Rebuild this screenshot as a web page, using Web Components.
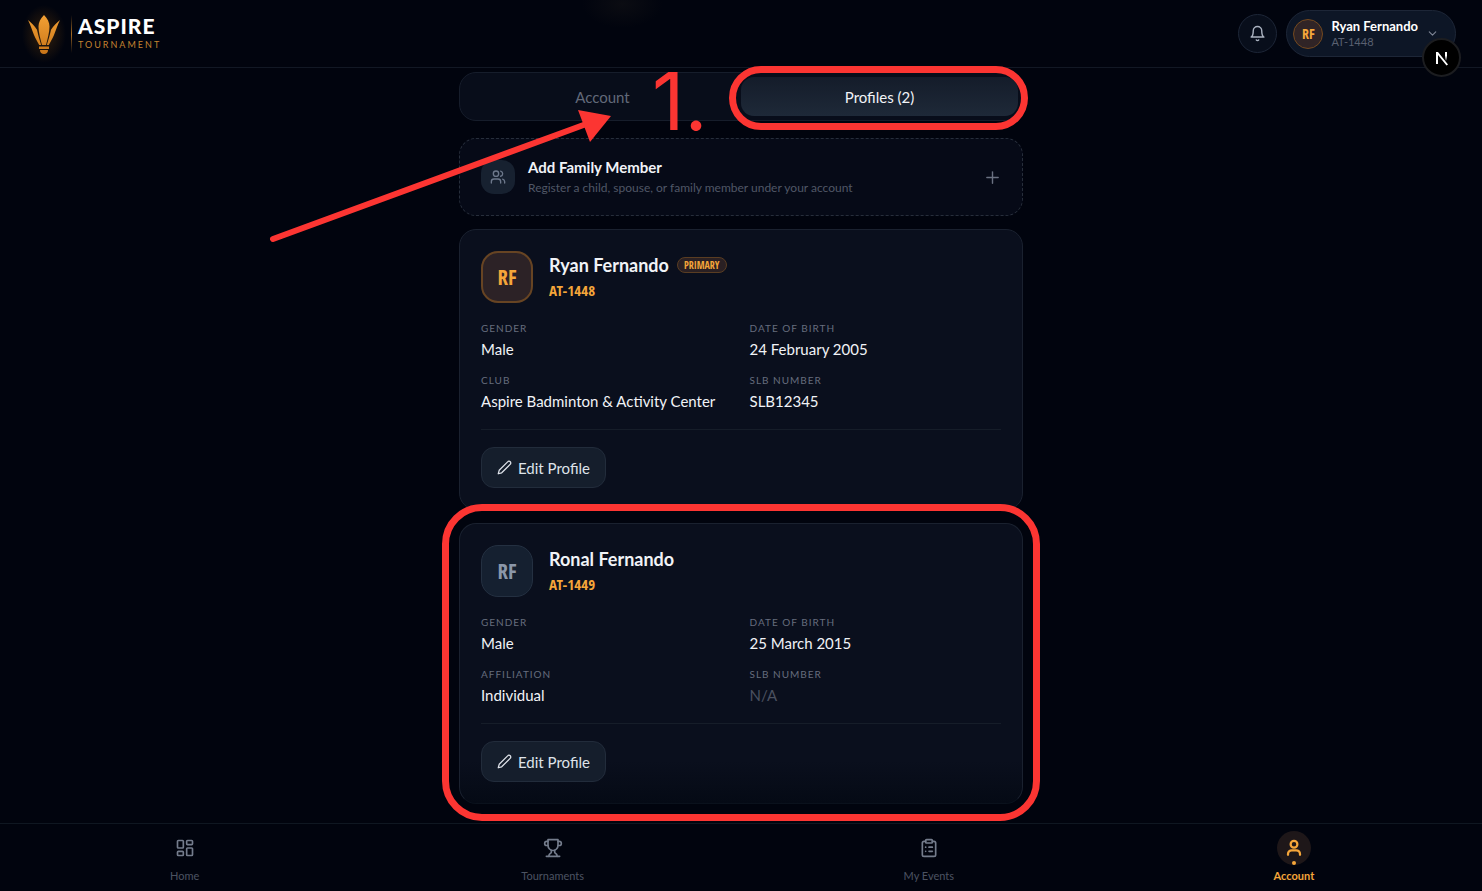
<!DOCTYPE html>
<html lang="en">
<head>
<meta charset="utf-8">
<meta name="viewport" content="width=device-width, initial-scale=1">
<title>Aspire Tournament</title>
<style>
  :root {
    --page: #01040e;
    --panel: #080d1a;
    --card: #0a0f1d;
    --raised: #151e2c;
    --line: #1a212f;
    --text: #f1f3f7;
    --muted: #5a6171;
    --accent: #f5a63a;
    --mark: #fc3532;
    --narrow: "Liberation Sans Narrow", "Open Sans Condensed", "Liberation Sans", sans-serif;
  }

  body {
    margin: 0;
    min-height: 100vh;
    display: flex;
    flex-direction: column;
    background: var(--page);
    color: var(--text);
    font-family: Lato, "Liberation Sans", sans-serif;
    font-size: 15px;
  }
</style>
</head>
<body>
  <app-header></app-header>

  <account-page>
    <profile-tabs></profile-tabs>
    <add-member></add-member>
    <profile-card name="Ryan Fernando" player-id="AT-1448" initials="RF" primary>
      <info-field label="Gender">Male</info-field>
      <info-field label="Date of birth">24 February 2005</info-field>
      <info-field label="Club">Aspire Badminton &amp; Activity Center</info-field>
      <info-field label="SLB number">SLB12345</info-field>
    </profile-card>
    <profile-card name="Ronal Fernando" player-id="AT-1449" initials="RF" marked>
      <info-field label="Gender">Male</info-field>
      <info-field label="Date of birth">25 March 2015</info-field>
      <info-field label="Affiliation">Individual</info-field>
      <info-field label="SLB number" empty>N/A</info-field>
    </profile-card>
    <step-arrow slot="overlay">1.</step-arrow>
  </account-page>

  <bottom-nav>
    <nav-item icon="home">Home</nav-item>
    <nav-item icon="trophy">Tournaments</nav-item>
    <nav-item icon="clipboard">My Events</nav-item>
    <nav-item icon="user" active>Account</nav-item>
  </bottom-nav>

<script>
/**
 * Stroke icons on a 24 unit grid.
 */
const icons = {
  bell: '<path d="M6 8a6 6 0 0 1 12 0c0 7 3 9 3 9H3s3-2 3-9"/><path d="M10.3 21a1.94 1.94 0 0 0 3.4 0"/>',
  chevron: '<path d="m6 9 6 6 6-6"/>',
  users: '<path d="M16 21v-2a4 4 0 0 0-4-4H6a4 4 0 0 0-4 4v2"/><circle cx="9" cy="7" r="4"/><path d="M22 21v-2a4 4 0 0 0-3-3.87"/><path d="M16 3.13a4 4 0 0 1 0 7.75"/>',
  plus: '<path d="M4 12h16"/><path d="M12 4v16"/>',
  pencil: '<path d="M17 3a2.85 2.83 0 1 1 4 4L7.500 20.500 2 22l1.500-5.500Z"/>',
  home: '<rect x="3" y="3" width="7" height="9" rx="1"/><rect x="14" y="3" width="7" height="5" rx="1"/><rect x="14" y="12" width="7" height="9" rx="1"/><rect x="3" y="16" width="7" height="5" rx="1"/>',
  trophy: '<path d="M6 9H4.500a2.500 2.500 0 0 1 0-5H6"/><path d="M18 9h1.500a2.500 2.500 0 0 0 0-5H18"/><path d="M4 22h16"/><path d="M10 14.660V17c0 .55-.47.98-.97 1.210C7.850 18.750 7 20.240 7 22"/><path d="M14 14.660V17c0 .55.47.98.97 1.210C16.150 18.750 17 20.240 17 22"/><path d="M18 2H6v7a6 6 0 0 0 12 0V2Z"/>',
  clipboard: '<rect x="8" y="2" width="8" height="4" rx="1"/><path d="M16 4h2a2 2 0 0 1 2 2v14a2 2 0 0 1-2 2H6a2 2 0 0 1-2-2V6a2 2 0 0 1 2-2h2"/><path d="M12 11h4"/><path d="M12 16h4"/><path d="M8 11h.01"/><path d="M8 16h.01"/>',
  user: '<circle cx="12" cy="7" r="4.500"/><path d="M4 21v-1a5 5 0 0 1 5-5h6a5 5 0 0 1 5 5v1"/>'
}

/**
 * Define icon element.
 */
customElements.define('line-icon',
  class extends HTMLElement {
    constructor () {
      super()
      this.attachShadow({ mode: 'open' })
    }

    /**
     * Called after the element is inserted into the DOM.
     */
    connectedCallback () {
      const size = this.getAttribute('size') || 20
      const weight = this.getAttribute('weight') || 2
      this.shadowRoot.innerHTML = `
        <style>
          :host { display: inline-flex; flex: none; }
          svg { display: block; }
        </style>
        <svg width="${size}" height="${size}" viewBox="0 0 24 24" fill="none" stroke="currentColor"
          stroke-width="${weight}" stroke-linecap="round" stroke-linejoin="round" aria-hidden="true">
          ${icons[this.getAttribute('name')]}
        </svg>
      `
    }
  }
)

const logoTemplate = document.createElement('template')
logoTemplate.innerHTML = `
  <style>
    :host {
      display: block;
    }

    a {
      display: flex;
      align-items: center;
      gap: 6px;
      color: inherit;
      text-decoration: none;
    }

    .mark {
      display: flex;
      padding: 6px 3px;
      margin-right: -1px;
      background: radial-gradient(closest-side, #33200c, transparent);
    }

    .rule {
      width: 1px;
      height: 38px;
      background: linear-gradient(transparent, #a56a22, transparent);
    }

    .words {
      display: flex;
      flex-direction: column;
      gap: 3px;
    }

    strong {
      font-size: 21px;
      line-height: 20px;
      font-weight: 900;
      letter-spacing: 1px;
      color: #fff;
    }

    small {
      font-size: 9px;
      line-height: 12px;
      letter-spacing: 2px;
      color: #c58330;
    }
  </style>

  <a href="#home">
    <span class="mark">
      <svg width="38" height="46" viewBox="0 0 38 46" aria-hidden="true">
        <defs>
          <linearGradient id="flame" x1="0" y1="4" x2="0" y2="43" gradientUnits="userSpaceOnUse">
            <stop offset="0" stop-color="#f3a034"/>
            <stop offset="1" stop-color="#c97518"/>
          </linearGradient>
        </defs>
        <g fill="url(#flame)">
          <path d="M19 4c-3.500 3.500-5.500 7.500-5.500 11.500 0 6 2 12.500 3.500 18.500h4c1.500-6 3.500-12.500 3.500-18.500C24.500 11.500 22.500 7.500 19 4Z"/>
          <path d="M3 9c3.500 2.800 6.500 6 9 9.800 1 5.200 2.700 10.200 4.200 15.200h-2C12 30 10.500 27.500 9 24 7 19 5.500 14 3 9Z"/>
          <path d="M35 9c-3.500 2.800-6.500 6-9 9.800-1 5.200-2.700 10.200-4.200 15.200h2C26 30 27.500 27.500 29 24 31 19 32.500 14 35 9Z"/>
          <path d="M14 35.500h10V38H14Z"/>
          <path d="M15 39h8c0 2.500-1.500 4-4 4s-4-1.500-4-4Z"/>
        </g>
      </svg>
    </span>
    <span class="rule"></span>
    <span class="words">
      <strong>ASPIRE</strong>
      <small>TOURNAMENT</small>
    </span>
  </a>
`

/**
 * Define logo element.
 */
customElements.define('aspire-logo',
  class extends HTMLElement {
    constructor () {
      super()
      this.attachShadow({ mode: 'open' })
        .appendChild(logoTemplate.content.cloneNode(true))
    }
  }
)

const headerTemplate = document.createElement('template')
headerTemplate.innerHTML = `
  <style>
    :host {
      display: block;
      position: relative;
      border-bottom: 1px solid #121824;
    }

    header {
      display: flex;
      align-items: center;
      justify-content: space-between;
      height: 67px;
      padding: 0 26px 0 22px;
      background: radial-gradient(ellipse 40px 24px at 42% 4px, #0b0c12, transparent);
    }

    .tools {
      display: flex;
      align-items: center;
      gap: 9px;
    }

    button {
      display: flex;
      align-items: center;
      box-sizing: border-box;
      border: 1px solid #1d2637;
      color: inherit;
      font: inherit;
      cursor: pointer;
    }

    .bell {
      width: 39px;
      height: 39px;
      justify-content: center;
      padding: 0;
      border-radius: 50%;
      background: #080e1b;
      color: #aab2c0;
    }

    .me {
      height: 47px;
      gap: 8px;
      padding: 0 16px 0 6px;
      border-radius: 24px;
      background: #0d1626;
      text-align: left;
    }

    .initials {
      width: 28px;
      height: 28px;
      border: 1px solid #74491f;
      border-radius: 50%;
      background: #302426;
      color: var(--accent);
      font: bold 14px/28px var(--narrow);
      text-align: center;
    }

    .who {
      display: flex;
      flex-direction: column;
    }

    .who strong {
      font-size: 13px;
      line-height: 16px;
      color: #fff;
    }

    .who small {
      font-size: 11px;
      line-height: 15px;
      color: var(--muted);
    }

    line-icon {
      color: #7d8595;
    }

    .bell line-icon {
      color: inherit;
    }

    .dev {
      position: absolute;
      right: 21px;
      bottom: -10px;
      z-index: 3;
      width: 39px;
      height: 39px;
      justify-content: center;
      padding: 0;
      border: 2px solid #1c1d20;
      border-radius: 50%;
      background: #000;
    }
  </style>

  <header>
    <aspire-logo></aspire-logo>
    <div class="tools">
      <button class="bell" aria-label="Notifications"><line-icon name="bell" size="17"></line-icon></button>
      <button class="me">
        <span class="initials">RF</span>
        <span class="who"><strong>Ryan Fernando</strong><small>AT-1448</small></span>
        <line-icon name="chevron" size="13"></line-icon>
      </button>
    </div>
  </header>
  <button class="dev" aria-label="Open developer tools">
    <svg width="16" height="16" viewBox="0 0 16 16" fill="none" aria-hidden="true">
      <defs>
        <linearGradient id="fade" x1="0" y1="0" x2="0" y2="1">
          <stop offset="0.4" stop-color="#fff"/>
          <stop offset="1" stop-color="#fff" stop-opacity="0"/>
        </linearGradient>
      </defs>
      <path d="M2 14V2h2l10 12.500-1.500 1L4 5v9Z" fill="#fff"/>
      <rect x="11" y="2" width="2" height="9" fill="url(#fade)"/>
    </svg>
  </button>
`

/**
 * Define header element.
 */
customElements.define('app-header',
  class extends HTMLElement {
    constructor () {
      super()
      this.attachShadow({ mode: 'open' })
        .appendChild(headerTemplate.content.cloneNode(true))
    }
  }
)

const pageTemplate = document.createElement('template')
pageTemplate.innerHTML = `
  <style>
    :host {
      display: block;
      flex: 1;
      padding: 4px 16px 19px;
    }

    main {
      position: relative;
      display: flex;
      flex-direction: column;
      gap: 13px;
      max-width: 564px;
      margin: 0 auto;
    }
  </style>

  <main>
    <slot></slot>
    <slot name="overlay"></slot>
  </main>
`

/**
 * Define page element, the centred column.
 */
customElements.define('account-page',
  class extends HTMLElement {
    constructor () {
      super()
      this.attachShadow({ mode: 'open' })
        .appendChild(pageTemplate.content.cloneNode(true))
    }
  }
)

const tabsTemplate = document.createElement('template')
tabsTemplate.innerHTML = `
  <style>
    :host {
      display: block;
      margin-bottom: 4px;
    }

    [role="tablist"] {
      display: grid;
      grid-template-columns: 1fr 1fr;
      padding: 4px;
      border: 1px solid #161d2b;
      border-radius: 17px;
      background: var(--panel);
    }

    .cell {
      position: relative;
      display: grid;
    }

    button {
      height: 39px;
      padding: 0;
      border: 0;
      border-radius: 13px;
      background: none;
      color: #626979;
      font: inherit;
      cursor: pointer;
    }

    [aria-selected="true"] {
      background: linear-gradient(#141c2a, #1e2938);
      color: var(--text);
    }

    /* Highlight over the selected tab */
    .ring {
      position: absolute;
      inset: -11px -10px -14px -12px;
      z-index: 2;
      border: 7px solid var(--mark);
      border-radius: 34px;
      pointer-events: none;
    }
  </style>

  <div role="tablist">
    <div class="cell"><button role="tab" aria-selected="false">Account</button></div>
    <div class="cell"><button role="tab" aria-selected="true">Profiles (2)</button><span class="ring"></span></div>
  </div>
`

/**
 * Define tabs element.
 */
customElements.define('profile-tabs',
  class extends HTMLElement {
    constructor () {
      super()
      this.attachShadow({ mode: 'open' })
        .appendChild(tabsTemplate.content.cloneNode(true))
    }
  }
)

const addTemplate = document.createElement('template')
addTemplate.innerHTML = `
  <style>
    :host {
      display: block;
    }

    button {
      display: flex;
      align-items: center;
      gap: 13px;
      width: 100%;
      padding: 17px 21px;
      border: 1px dashed #272e3b;
      border-radius: 17px;
      background: #060a17;
      color: inherit;
      font: inherit;
      text-align: left;
      cursor: pointer;
    }

    .badge {
      display: flex;
      align-items: center;
      justify-content: center;
      width: 34px;
      height: 34px;
      border-radius: 13px;
      background: #172130;
      color: #6d788b;
    }

    .text {
      display: flex;
      flex: 1;
      flex-direction: column;
    }

    strong {
      font-size: 15px;
      line-height: 22px;
      font-weight: 700;
    }

    small {
      font-size: 12px;
      line-height: 20px;
      color: #505766;
    }

    .plus {
      color: #6a7181;
    }
  </style>

  <button>
    <span class="badge"><line-icon name="users" size="16"></line-icon></span>
    <span class="text">
      <strong>Add Family Member</strong>
      <small>Register a child, spouse, or family member under your account</small>
    </span>
    <line-icon class="plus" name="plus" size="17"></line-icon>
  </button>
`

/**
 * Define add member element.
 */
customElements.define('add-member',
  class extends HTMLElement {
    constructor () {
      super()
      this.attachShadow({ mode: 'open' })
        .appendChild(addTemplate.content.cloneNode(true))
    }
  }
)

const fieldTemplate = document.createElement('template')
fieldTemplate.innerHTML = `
  <style>
    :host {
      display: block;
    }

    .label {
      margin-bottom: 2px;
      font-size: 10px;
      line-height: 16px;
      letter-spacing: 1px;
      text-transform: uppercase;
      color: #666d7e;
    }

    .value {
      font-size: 15px;
      line-height: 22px;
    }

    :host([empty]) .value {
      color: #4b5160;
    }
  </style>

  <div class="label"></div>
  <div class="value"><slot></slot></div>
`

/**
 * Define labelled value element.
 */
customElements.define('info-field',
  class extends HTMLElement {
    constructor () {
      super()
      this.attachShadow({ mode: 'open' })
        .appendChild(fieldTemplate.content.cloneNode(true))
    }

    /**
     * Called after the element is inserted into the DOM.
     */
    connectedCallback () {
      this.shadowRoot.querySelector('.label').textContent = this.getAttribute('label')
    }
  }
)

const cardTemplate = document.createElement('template')
cardTemplate.innerHTML = `
  <style>
    :host {
      display: block;
      position: relative;
    }

    article {
      padding: 21px;
      border: 1px solid var(--line);
      border-radius: 17px;
      background: var(--card);
    }

    :host([marked]) article {
      border-bottom-color: #0a111c;
      background: linear-gradient(var(--card) 85%, #050a15);
    }

    .top {
      display: flex;
      align-items: center;
      gap: 16px;
    }

    .avatar {
      box-sizing: border-box;
      width: 52px;
      height: 52px;
      border: 1px solid #243041;
      border-radius: 17px;
      background: #152030;
      color: #8b97a9;
      font: bold 21px/50px var(--narrow);
      text-align: center;
    }

    :host([primary]) .avatar {
      border: 2px solid #674423;
      background: #2c2226;
      color: var(--accent);
      line-height: 48px;
    }

    .title {
      display: flex;
      align-items: center;
      gap: 8px;
    }

    h2 {
      margin: 0;
      font-size: 18px;
      line-height: 26px;
      font-weight: 700;
    }

    .tag {
      padding: 0 6px;
      border: 1px solid #5a3d22;
      border-radius: 8px;
      background: #2a2023;
      color: var(--accent);
      font: bold 10px/14px var(--narrow);
    }

    .id {
      color: var(--accent);
      font: bold 15px/24px var(--narrow);
    }

    .fields {
      display: grid;
      grid-template-columns: 1fr 1fr;
      gap: 12px 17px;
      margin: 17px 0;
    }

    footer {
      padding-top: 17px;
      border-top: 1px solid #161d29;
    }

    button {
      display: flex;
      align-items: center;
      gap: 6px;
      height: 41px;
      padding: 0 15px;
      border: 1px solid #222c3b;
      border-radius: 13px;
      background: var(--raised);
      color: #dfe3ea;
      font: inherit;
      cursor: pointer;
    }

    .ring {
      display: none;
      position: absolute;
      inset: -19px -17px -17px;
      z-index: 2;
      border: 7px solid var(--mark);
      border-radius: 40px;
      pointer-events: none;
    }

    :host([marked]) .ring {
      display: block;
    }
  </style>

  <article>
    <div class="top">
      <div class="avatar"></div>
      <div>
        <div class="title"><h2></h2><span class="tag">PRIMARY</span></div>
        <div class="id"></div>
      </div>
    </div>
    <div class="fields"><slot></slot></div>
    <footer>
      <button><line-icon name="pencil" size="15"></line-icon>Edit Profile</button>
    </footer>
  </article>
  <span class="ring"></span>
`

/**
 * Define profile card element.
 */
customElements.define('profile-card',
  class extends HTMLElement {
    constructor () {
      super()
      this.attachShadow({ mode: 'open' })
        .appendChild(cardTemplate.content.cloneNode(true))
    }

    /**
     * Called after the element is inserted into the DOM.
     */
    connectedCallback () {
      this.shadowRoot.querySelector('.avatar').textContent = this.getAttribute('initials')
      this.shadowRoot.querySelector('h2').textContent = this.getAttribute('name')
      this.shadowRoot.querySelector('.id').textContent = this.getAttribute('player-id')
      if (!this.hasAttribute('primary')) {
        this.shadowRoot.querySelector('.tag').remove()
      }
    }
  }
)

const arrowTemplate = document.createElement('template')
arrowTemplate.innerHTML = `
  <style>
    :host {
      position: absolute;
      top: -6px;
      left: -190px;
      z-index: 2;
      display: flex;
      align-items: flex-start;
      gap: 38px;
      color: var(--mark);
      pointer-events: none;
    }

    svg {
      display: block;
    }

    span {
      font: 400 80px/70px Inter, sans-serif;
    }
  </style>

  <svg width="345" height="180" viewBox="0 0 345 180" aria-hidden="true">
    <path d="M4 173 320 57" stroke="currentColor" stroke-width="6" stroke-linecap="round"/>
    <path d="M342 50 309 44 321 76Z" fill="currentColor"/>
  </svg>
  <span><slot></slot></span>
`

/**
 * Define arrow element with its step number.
 */
customElements.define('step-arrow',
  class extends HTMLElement {
    constructor () {
      super()
      this.attachShadow({ mode: 'open' })
        .appendChild(arrowTemplate.content.cloneNode(true))
    }
  }
)

const navTemplate = document.createElement('template')
navTemplate.innerHTML = `
  <style>
    :host {
      display: block;
      border-top: 1px solid #0f1721;
    }

    nav {
      display: flex;
      justify-content: space-around;
      padding: 7px 8px;
    }
  </style>

  <nav><slot></slot></nav>
`

/**
 * Define bottom navigation element.
 */
customElements.define('bottom-nav',
  class extends HTMLElement {
    constructor () {
      super()
      this.attachShadow({ mode: 'open' })
        .appendChild(navTemplate.content.cloneNode(true))
    }
  }
)

const navItemTemplate = document.createElement('template')
navItemTemplate.innerHTML = `
  <style>
    :host {
      display: block;
    }

    a {
      display: flex;
      flex-direction: column;
      align-items: center;
      gap: 3px;
      color: #4c5362;
      font-size: 11px;
      line-height: 16px;
      text-decoration: none;
    }

    .icon {
      position: relative;
      display: flex;
      align-items: center;
      justify-content: center;
      width: 34px;
      height: 34px;
      border-radius: 50%;
      color: #747c8c;
    }

    :host([active]) a {
      color: var(--accent);
      font-weight: 700;
    }

    :host([active]) .icon {
      background: #1e1719;
      color: var(--accent);
    }

    :host([active]) .icon::after {
      content: "";
      position: absolute;
      bottom: 0;
      width: 4px;
      height: 4px;
      border-radius: 50%;
      background: var(--accent);
    }
  </style>

  <a>
    <span class="icon"></span>
    <span><slot></slot></span>
  </a>
`

/**
 * Define navigation item element.
 */
customElements.define('nav-item',
  class extends HTMLElement {
    constructor () {
      super()
      this.attachShadow({ mode: 'open' })
        .appendChild(navItemTemplate.content.cloneNode(true))
    }

    /**
     * Called after the element is inserted into the DOM.
     */
    connectedCallback () {
      const name = this.getAttribute('icon')
      const active = this.hasAttribute('active')
      this.shadowRoot.querySelector('a').href = `#${name}`
      this.shadowRoot.querySelector('.icon').innerHTML =
        `<line-icon name="${name}" size="${active ? 18 : 20}" weight="${active ? 3 : 2}"></line-icon>`
    }
  }
)
</script>
</body>
</html>
